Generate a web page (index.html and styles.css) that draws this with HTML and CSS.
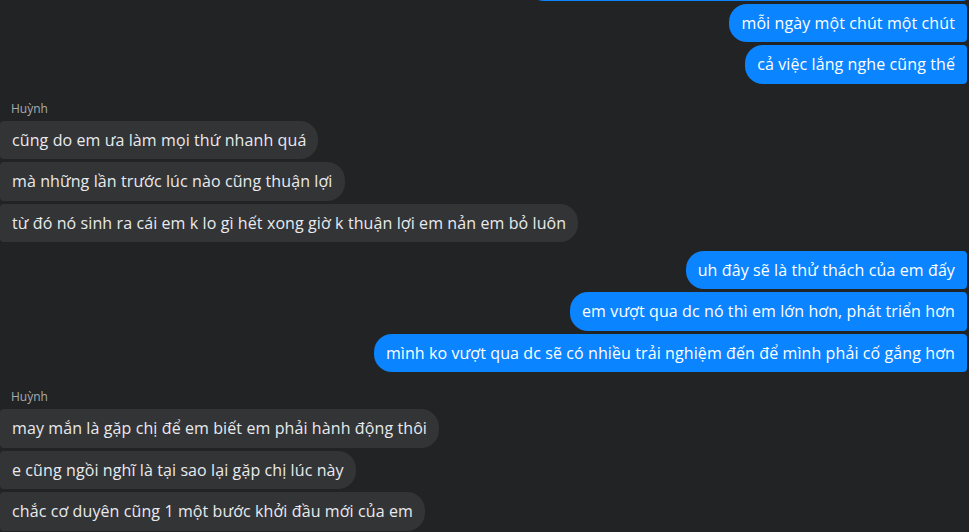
FILE: index.html
```html
<!DOCTYPE html>
<html lang="vi">
<head>
<meta charset="utf-8">
<link rel="stylesheet" href="styles.css">
</head>
<body>
<div class="chat">
  <div class="group out first-cut">
    <div class="bubble out-b cut">&nbsp;</div>
    <div class="bubble out-b">mỗi ngày một chút một chút</div>
    <div class="bubble out-b">cả việc lắng nghe cũng thế</div>
  </div>

  <div class="group in">
    <div class="name">Huỳnh</div>
    <div class="bubble in-b">cũng do em ưa làm mọi thứ nhanh quá</div>
    <div class="bubble in-b">mà những lần trước lúc nào cũng thuận lợi</div>
    <div class="bubble in-b">từ đó nó sinh ra cái em k lo gì hết xong giờ k thuận lợi em nản em bỏ luôn</div>
  </div>

  <div class="group out">
    <div class="bubble out-b">uh đây sẽ là thử thách của em đấy</div>
    <div class="bubble out-b">em vượt qua dc nó thì em lớn hơn, phát triển hơn</div>
    <div class="bubble out-b">mình ko vượt qua dc sẽ có nhiều trải nghiệm đến để mình phải cố gắng hơn</div>
  </div>

  <div class="group in">
    <div class="name">Huỳnh</div>
    <div class="bubble in-b">may mắn là gặp chị để em biết em phải hành động thôi</div>
    <div class="bubble in-b">e cũng ngồi nghĩ là tại sao lại gặp chị lúc này</div>
    <div class="bubble in-b">chắc cơ duyên cũng 1 một bước khởi đầu mới của em</div>
  </div>
</div>
</body>
</html>
```
FILE: styles.css
```css
* { box-sizing: border-box; }
html, body {
  margin: 0;
  height: 100%;
  background: #222324;
  overflow: hidden;
}
body {
  font-family: "Open Sans", "Noto Sans", sans-serif;
  color: #e4e6eb;
}
.chat {
  display: flex;
  flex-direction: column;
}
.group {
  display: flex;
  flex-direction: column;
  gap: 3px;
}
.group.out {
  align-items: flex-end;
  padding-right: 2px;
  margin-top: 8.5px;
}
.group.out.first-cut {
  margin-top: -38px;
}
.group.in {
  align-items: flex-start;
  margin-top: 17px;
}
.name {
  font-size: 12px;
  line-height: 16px;
  color: #a8abaf;
  padding-left: 11px;
  margin-bottom: 1px;
}
.bubble {
  font-size: 16px;
  line-height: 22.5px;
  letter-spacing: 0.1px;
  padding: 8px 12px;
  border-radius: 18px;
  white-space: nowrap;
}
.out-b {
  background: #0a84ff;
  color: #ffffff;
  border-top-right-radius: 4px;
  border-bottom-right-radius: 4px;
}
.in-b {
  background: #333436;
  color: #e9eaed;
  border-top-left-radius: 4px;
  border-bottom-left-radius: 4px;
}
.cut {
  width: 441px;
}
```
